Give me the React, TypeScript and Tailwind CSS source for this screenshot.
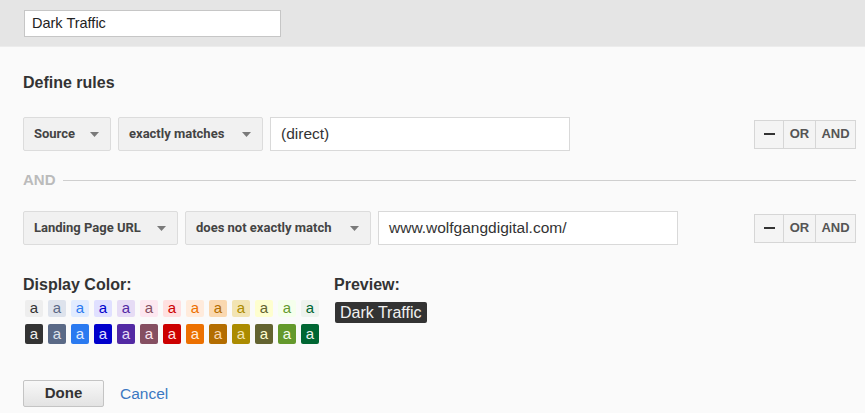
const swatches = [
  { light: "#eeeeee", dark: "#333333" },
  { light: "#dee3ec", dark: "#5a6986" },
  { light: "#e1ecff", dark: "#2a7af0" },
  { light: "#e0e0ff", dark: "#0000cc" },
  { light: "#e6dcf5", dark: "#5229a3" },
  { light: "#fde7f0", dark: "#854f61" },
  { light: "#ffe0e0", dark: "#cc0000" },
  { light: "#ffebdc", dark: "#ec7000" },
  { light: "#fad8b0", dark: "#b36d00" },
  { light: "#f2e4b4", dark: "#ab8b00" },
  { light: "#fefecf", dark: "#636330" },
  { light: "#f5ffec", dark: "#64992c" },
  { light: "#eef3ee", dark: "#006633" },
];

const Caret = () => (
  <svg width="9" height="5" viewBox="0 0 9 5" className="shrink-0">
    <path d="M0 0h9L4.5 5z" fill="#7a7a7a" />
  </svg>
);

const Select = ({ label, w }: { label: string; w: string }) => (
  <div
    className={`${w} h-[34px] shrink-0 flex items-center justify-between pl-[10px] pr-[11px] bg-[#f1f1f1] border border-[#dcdcdc] rounded-[2px] font-['Roboto',sans-serif] font-bold text-[13px] text-[#444]`}
  >
    <span className="whitespace-nowrap">{label}</span>
    <Caret />
  </div>
);

const Ops = () => (
  <div className="ml-auto flex h-[29px] border border-[#d6d6d6] bg-[#f4f4f4] font-bold text-[13px] text-[#555]">
    <div className="w-[29px] flex items-center justify-center border-r border-[#d6d6d6]">
      <span className="block w-[11px] h-[2px] bg-[#333]" />
    </div>
    <div className="w-[32px] flex items-center justify-center border-r border-[#d6d6d6]">OR</div>
    <div className="w-[39px] flex items-center justify-center">AND</div>
  </div>
);

const Rule = ({ a, aw, b, bw, value }: { a: string; aw: string; b: string; bw: string; value: string }) => (
  <div className="flex items-center gap-[7px] pl-[23px] pr-[9px]">
    <Select label={a} w={aw} />
    <Select label={b} w={bw} />
    <div className="w-[300px] h-[34px] bg-white border border-[#d9d9d9] flex items-center pl-[10px] text-[15.5px] text-[#333]">
      {value}
    </div>
    <Ops />
  </div>
);

export default function App() {
  return (
    <div className="w-[865px] h-[413px] bg-[#fafafa] font-['Liberation_Sans',Arial,sans-serif] overflow-hidden">
      <div className="h-[47px] bg-[#e5e5e5] border-b border-[#ececec] pt-[10px] pl-[24px]">
        <div className="w-[257px] h-[27px] bg-white border border-[#c6c6c6] flex items-center pl-[7px] text-[14.5px] text-[#222]">
          Dark Traffic
        </div>
      </div>

      <div className="mt-[27px] pl-[23px] h-[17px] leading-[17px] text-[16px] font-bold text-[#333]">
        Define rules
      </div>

      <div className="mt-[26px]">
        <Rule a="Source" aw="w-[88px]" b="exactly matches" bw="w-[145px]" value="(direct)" />
      </div>

      <div className="mt-[22px] h-[15px] flex items-center pl-[23px] pr-[9px] gap-[7px]">
        <span className="text-[15px] font-bold text-[#bbbbbb]">AND</span>
        <div className="flex-1 h-px bg-[#cfcfcf]" />
      </div>

      <div className="mt-[23px]">
        <Rule
          a="Landing Page URL"
          aw="w-[155px]"
          b="does not exactly match"
          bw="w-[186px]"
          value="www.wolfgangdigital.com/"
        />
      </div>

      <div className="mt-[31px] pl-[23px] flex">
        <div className="w-[311px]">
          <div className="h-[17px] leading-[17px] text-[16px] font-bold text-[#333]">
            Display Color:
          </div>
          <div className="mt-[7px] flex gap-[5px] pl-[2px]">
            {swatches.map((s, i) => (
              <div
                key={i}
                className="w-[18px] h-[17px] rounded-[2px] flex items-center justify-center text-[15px] leading-none pb-[2px]"
                style={{ background: s.light, color: s.dark }}
              >
                a
              </div>
            ))}
          </div>
          <div className="mt-[7px] flex gap-[5px] pl-[2px]">
            {swatches.map((s, i) => (
              <div
                key={i}
                className="w-[18px] h-[20px] rounded-[2px] flex items-center justify-center text-[15px] leading-none pb-[2px]"
                style={{ background: s.dark, color: s.light }}
              >
                a
              </div>
            ))}
          </div>
        </div>
        <div>
          <div className="h-[17px] leading-[17px] text-[16px] font-bold text-[#333]">
            Preview:
          </div>
          <div className="mt-[9px] ml-px inline-flex items-center h-[21px] px-[5px] rounded-[2px] bg-[#333] text-[#f0f0f0] text-[16px]">
            Dark Traffic
          </div>
        </div>
      </div>

      <div className="mt-[36px] pl-[23px] flex items-center gap-[16px]">
        <div className="w-[81px] h-[27px] flex items-center justify-center rounded-[2px] border border-[#c4c4c4] bg-gradient-to-b from-[#f8f8f8] to-[#e3e3e3] text-[15px] font-bold text-[#333]">
          Done
        </div>
        <span className="text-[15.5px] text-[#3b78c2]">Cancel</span>
      </div>
    </div>
  );
}
